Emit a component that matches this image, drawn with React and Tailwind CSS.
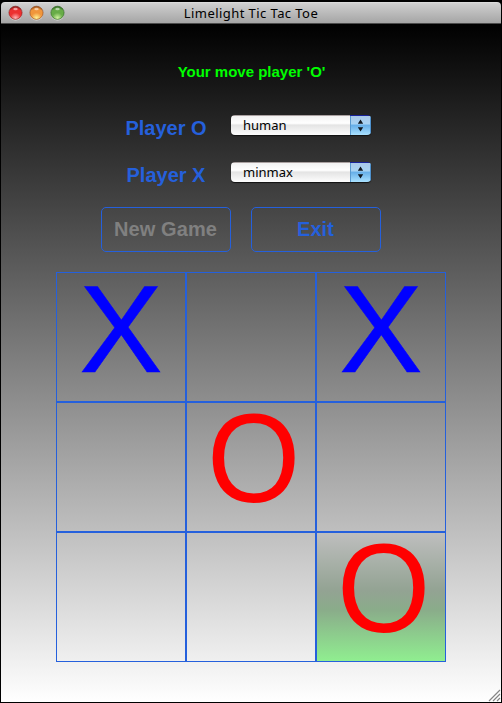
import React from "react";

const board = ["X", "", "X", "", "O", "", "", "", "O"];

function TrafficLight({ id, dark, mid, light }) {
  return (
    <svg width="15" height="16" viewBox="0 0 15 16">
      <defs>
        <radialGradient id={id} cx="50%" cy="90%" r="90%">
          <stop offset="0" stopColor={light} />
          <stop offset="0.45" stopColor={mid} />
          <stop offset="0.75" stopColor={mid} />
          <stop offset="1" stopColor={dark} />
        </radialGradient>
      </defs>
      <circle cx="7.5" cy="8.6" r="6.8" fill="#dedede" />
      <circle cx="7.5" cy="7.8" r="6.6" fill={`url(#${id})`} stroke={dark} strokeWidth="0.6" />
      <ellipse cx="7.5" cy="4" rx="2.2" ry="1.2" fill="#fff" opacity="0.55" />
    </svg>
  );
}

function PlayerRow({ label, value }) {
  return (
    <div className="flex h-[21px] w-[270px] items-start">
      <div className="w-[90px] pt-[3px] text-center text-[20px] leading-[21px] font-bold whitespace-nowrap text-[#2560dc]">
        {label}
      </div>
      <div className="ml-[20px] flex h-[20px] w-[140px] overflow-hidden rounded-[4px] shadow-[0_1px_1px_#111]">
        <div className="flex-1 border-t border-[#aaa1a1] bg-[linear-gradient(#f2f2f2,#ffffff_38%,#e4e4e4_48%,#fdfdfd)] pl-[12px] font-['Noto_Sans',sans-serif] text-[13px] leading-[19px] text-black">
          {value}
        </div>
        <div className="flex w-[21px] items-center justify-center border-t border-[#18229a] bg-[linear-gradient(#a9c8e8,#a9d3f3_40%,#68b0e9_50%,#a9e1ff)] shadow-[inset_-1px_0_#4e91cd,inset_1px_0_#5999ce]">
          <svg width="7" height="13" viewBox="0 0 7 13" fill="#101820">
            <path d="M3.5 0.5L6.2 4.7H0.8zM3.5 12.5L0.8 8.3h5.4z" />
          </svg>
        </div>
      </div>
    </div>
  );
}

export default function App() {
  return (
    <div className="h-[703px] w-[502px] overflow-hidden bg-black px-px pt-[2px] pb-px font-['Liberation_Sans',Arial,sans-serif]">
      <header className="flex h-[22px] items-center rounded-t-[4px] border-b border-[#4b4b4b] bg-[linear-gradient(#e0e0e0,#cecece_8%,#a5a5a5)]">
        <div className="flex w-[100px] gap-[6px] pl-[7px]">
          <TrafficLight id="close" dark="#7c1715" mid="#ec3030" light="#ffb7b7" />
          <TrafficLight id="minimize" dark="#8d4210" mid="#f0963c" light="#fff595" />
          <TrafficLight id="zoom" dark="#275f1a" mid="#68ac48" light="#d4f5a2" />
        </div>
        <div className="flex-1 pt-[2px] text-center font-['Noto_Sans',sans-serif] text-[13px] leading-[19px] tracking-[0.43px] text-black">
          Limelight Tic Tac Toe
        </div>
        <div className="w-[100px]" />
      </header>
      <main className="relative h-[678px] bg-[linear-gradient(#000,#fff)]">
        <div className="pt-[39px] pl-px text-center text-[15px] leading-[18px] font-bold text-[#00ff00]">
          Your move player 'O'
        </div>
        <div className="mt-[34px] ml-[120px] flex flex-col gap-[26px]">
          <PlayerRow label="Player O" value="human" />
          <PlayerRow label="Player X" value="minmax" />
        </div>
        <div className="mt-[24px] ml-[100px] flex gap-[20px] text-[20px] leading-[43px] font-bold">
          <button className="h-[45px] w-[130px] rounded-[5px] border border-[#2560dc] pr-px tracking-[0.1px] text-[#808080]">New Game</button>
          <button className="h-[45px] w-[130px] rounded-[5px] border border-[#2560dc] pr-px tracking-[0.1px] text-[#2560dc]">Exit</button>
        </div>
        <div className="mt-[20px] ml-[55px] grid w-[390px] grid-cols-3">
          {board.map((mark, i) => (
            <div
              key={i}
              className={`h-[130px] border border-[#2560dc] text-center text-[125px] leading-[111px] ${
                i === 8 ? "bg-[linear-gradient(#bebebe,#93a393_45%,#8aac8a_60%,#90ee90)]" : ""
              }`}
            >
              {mark === "X" && (
                <span className="inline-block -translate-y-[0.5px] text-[#0000ff] [-webkit-text-stroke:0.6px_#0000ff]">X</span>
              )}
              {mark === "O" && (
                <span className="inline-block translate-x-[3px] -translate-y-[0.5px] scale-x-[0.96] scale-y-[1.01] text-[#ff0000]">O</span>
              )}
            </div>
          ))}
        </div>
        <svg className="absolute right-0 bottom-0" width="13" height="13" viewBox="0 0 13 13" stroke="#858585" strokeWidth="1.2">
          <path d="M1 12L12 1M5 12l7-7M9 12l3-3" />
        </svg>
      </main>
    </div>
  );
}
